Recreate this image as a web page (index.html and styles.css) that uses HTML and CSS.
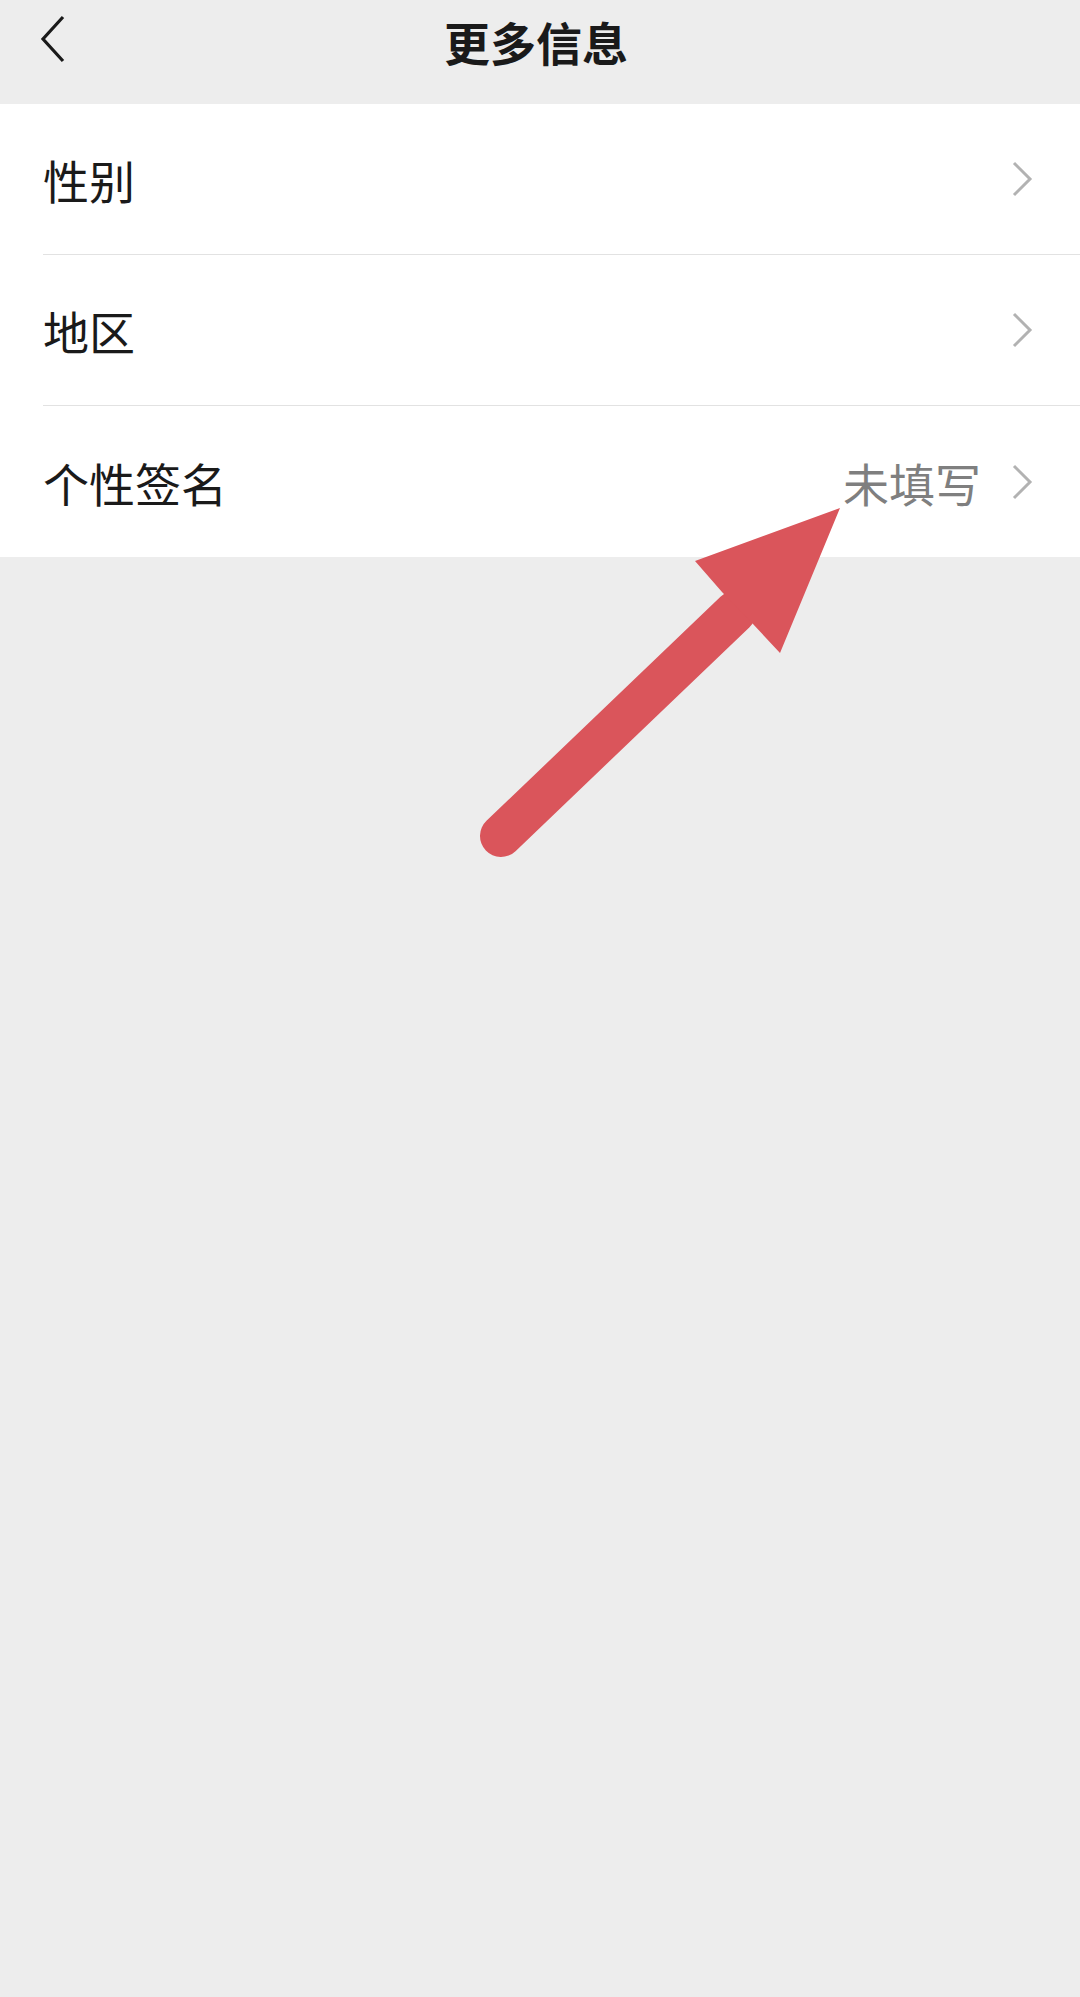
FILE: index.html
```html
<!DOCTYPE html>
<html lang="zh-CN">
<head>
    <meta charset="UTF-8">
    <meta name="viewport" content="width=device-width, initial-scale=1.0">
    <title>更多信息</title>
    <link rel="stylesheet" href="styles.css">
</head>
<body>

<!-- Верхняя панель -->
<div class="header">
    <div class="back-btn">
        <svg width="26" height="48" viewBox="0 0 26 48">
            <polyline points="23,2 3,24 23,46" fill="none" stroke="#1a1a1a" stroke-width="3.2"/>
        </svg>
    </div>
    <div class="title">更多信息</div>
    <div></div>
</div>

<!-- Список -->
<div class="list">
    <div class="item">
        <div class="item-inner">
            <span class="label">性别</span>
            <span class="arrow"><svg width="22" height="38" viewBox="0 0 22 38"><polyline points="3,3 19,19 3,35" fill="none" stroke="#b2b2b2" stroke-width="3"/></svg></span>
        </div>
    </div>
    <div class="item">
        <div class="item-inner">
            <span class="label">地区</span>
            <span class="arrow"><svg width="22" height="38" viewBox="0 0 22 38"><polyline points="3,3 19,19 3,35" fill="none" stroke="#b2b2b2" stroke-width="3"/></svg></span>
        </div>
    </div>
    <div class="item">
        <div class="item-inner last">
            <span class="label">个性签名</span>
            <span class="value">未填写</span>
            <span class="arrow"><svg width="22" height="38" viewBox="0 0 22 38"><polyline points="3,3 19,19 3,35" fill="none" stroke="#b2b2b2" stroke-width="3"/></svg></span>
        </div>
    </div>
</div>

<!-- Красная стрелка поверх экрана -->
<svg class="pointer" width="1080" height="1997" viewBox="0 0 1080 1997">
    <line x1="501" y1="836" x2="735" y2="612" stroke="#da555b" stroke-width="42" stroke-linecap="round"/>
    <polygon points="840,508 780,653 753,624 722,592 695,561" fill="#da555b"/>
</svg>

</body>
</html>
```

FILE: styles.css
```css
/* Общие стили */
body {
    margin: 0;
    background-color: #ededed;
    font-family: "Noto Sans CJK SC", "Noto Sans", sans-serif;
    color: #1a1a1a;
    position: relative;
    min-height: 1997px;
}

/* Шапка */
.header {
    height: 82px;
    padding-bottom: 22px;
    display: grid;
    grid-template-columns: 1fr auto 1fr;
    align-items: center;
}
.back-btn {
    padding-left: 40px;
    display: flex;
    align-items: center;
    margin-top: -4px;
}
.title {
    font-size: 46px;
    font-weight: 700;
    line-height: 1;
    margin-left: -8px;
}

/* Строки списка */
.list {
    background-color: #fff;
}
.item {
    padding-left: 43px;
}
.item-inner {
    height: 150px;
    display: flex;
    align-items: center;
    border-bottom: 1px solid #e2e2e2;
    padding-right: 47px;
    padding-left: 0;
}
.item-inner.last {
    border-bottom: none;
    height: 151px;
}
.label {
    font-size: 46px;
    line-height: 1;
    flex: 1;
}
.value {
    font-size: 46px;
    line-height: 1;
    color: #7f7f7f;
    margin-right: 30px;
}
.arrow {
    display: flex;
    align-items: center;
}

/* Стрелка-указатель */
.pointer {
    position: absolute;
    top: 0;
    left: 0;
    pointer-events: none;
}
```
